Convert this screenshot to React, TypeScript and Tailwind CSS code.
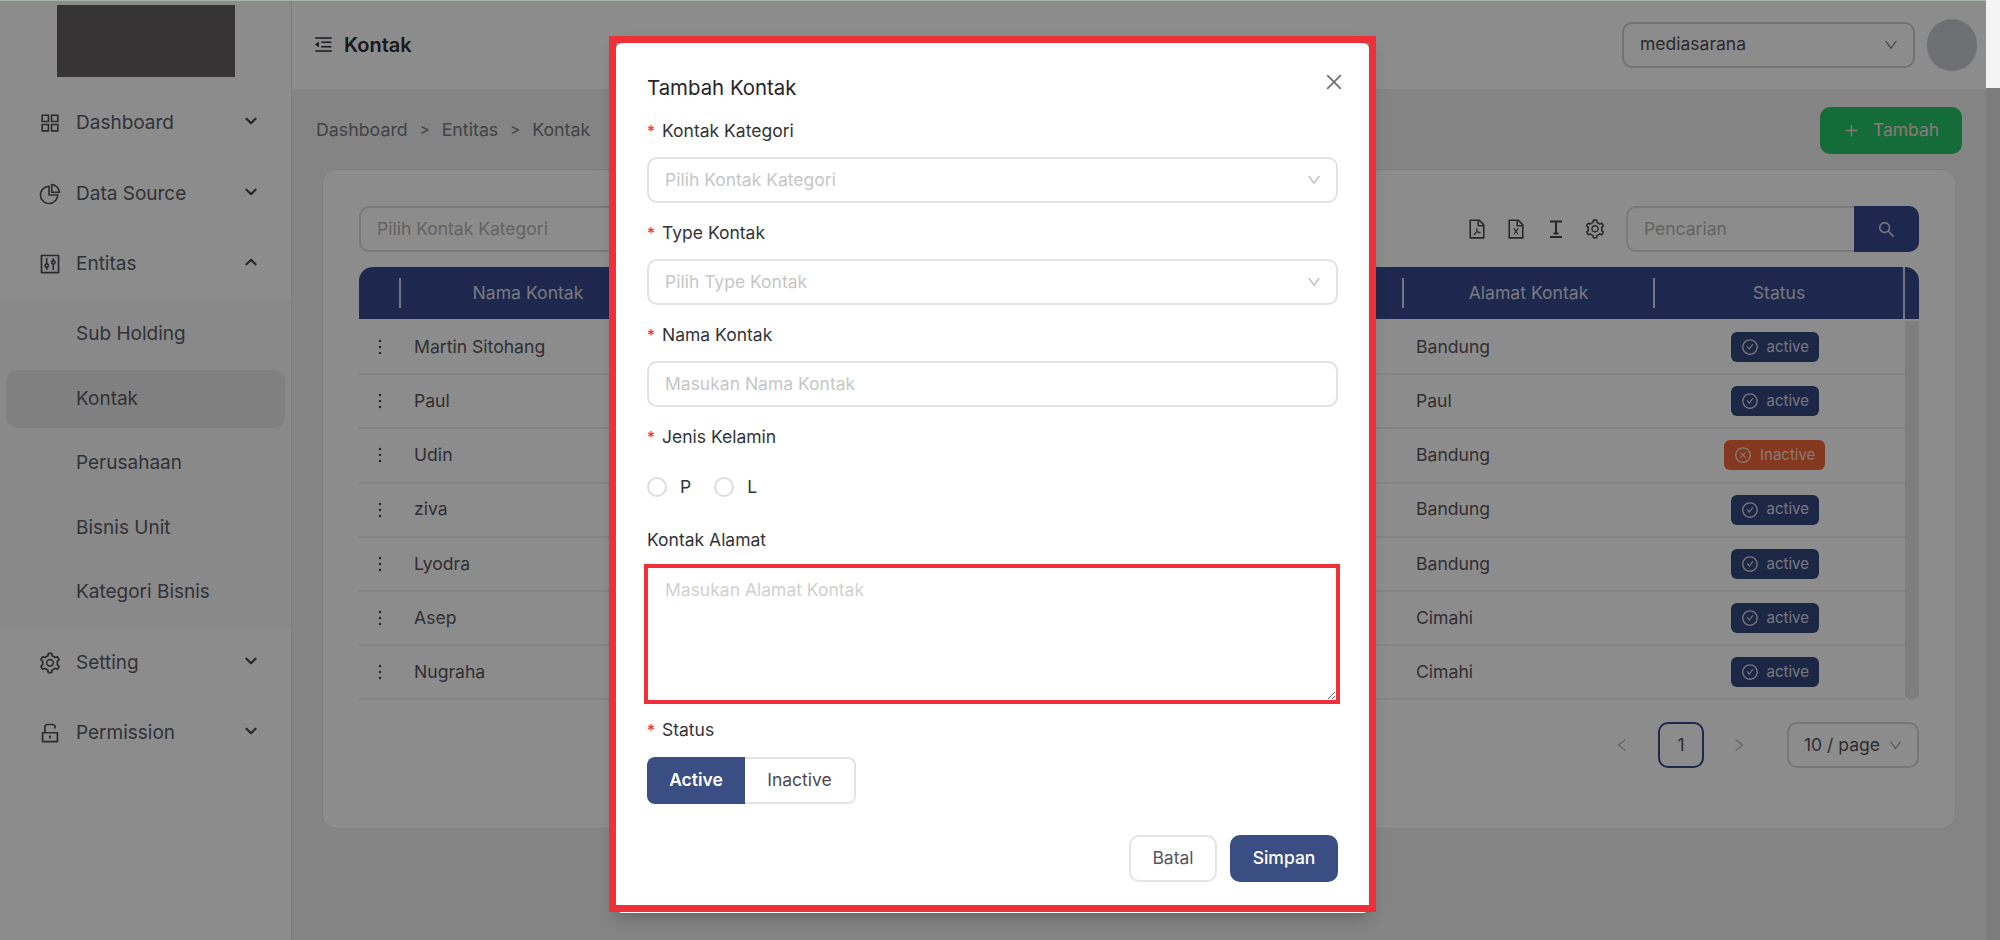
import { ReactNode } from 'react';
import {
  AiOutlineAppstore,
  AiOutlineCheckCircle,
  AiOutlineClose,
  AiOutlineCloseCircle,
  AiOutlineControl,
  AiOutlineDown,
  AiOutlineFileExcel,
  AiOutlineFilePdf,
  AiOutlineLeft,
  AiOutlineMenuFold,
  AiOutlineMore,
  AiOutlinePieChart,
  AiOutlinePlus,
  AiOutlineRight,
  AiOutlineSearch,
  AiOutlineSetting,
  AiOutlineUnlock,
} from 'react-icons/ai';
import { LuChevronDown, LuChevronUp } from 'react-icons/lu';

const subMenu = ['Sub Holding', 'Kontak', 'Perusahaan', 'Bisnis Unit', 'Kategori Bisnis'];

const rows = [
  { name: 'Martin Sitohang', address: 'Bandung', active: true },
  { name: 'Paul', address: 'Paul', active: true },
  { name: 'Udin', address: 'Bandung', active: false },
  { name: 'ziva', address: 'Bandung', active: true },
  { name: 'Lyodra', address: 'Bandung', active: true },
  { name: 'Asep', address: 'Cimahi', active: true },
  { name: 'Nugraha', address: 'Cimahi', active: true },
];

const MenuItem = ({ icon, label, open }: { icon: ReactNode; label: string; open?: boolean }) => (
  <div className="flex h-[70.5px] items-center pl-[38px] pr-[31px] text-[19px] text-[#5b5c66]">
    <span className="flex w-[38px] shrink-0 text-[24px] text-[#4f4e54]">{icon}</span>
    <span className="flex-1">{label}</span>
    <span className="-mt-[4px] text-[18px] text-[#4a4a50]">
      {open ? <LuChevronUp strokeWidth={3} /> : <LuChevronDown strokeWidth={3} />}
    </span>
  </div>
);

const Sidebar = () => (
  <aside className="flex w-[292px] shrink-0 flex-col border-r border-[#e6e6e6] bg-white">
    <div className="flex h-[88px] justify-center pt-[5px]">
      <div className="h-[72px] w-[178px] bg-[#636061]" />
    </div>
    <MenuItem icon={<AiOutlineAppstore />} label="Dashboard" />
    <MenuItem icon={<AiOutlinePieChart />} label="Data Source" />
    <MenuItem icon={<AiOutlineControl />} label="Entitas" open />
    <div className="flex flex-col gap-[6.5px] bg-[#fafafa] px-[6px] py-[6px] text-[19px] text-[#5b5c66]">
      {subMenu.map(item => (
        <div
          key={item}
          className={`flex h-[58px] items-center rounded-[12px] pl-[70px] ${item === 'Kontak' ? 'bg-[#e9e9e9]' : ''}`}
        >
          {item}
        </div>
      ))}
    </div>
    <MenuItem icon={<AiOutlineSetting />} label="Setting" />
    <MenuItem icon={<AiOutlineUnlock />} label="Permission" />
  </aside>
);

const Badge = ({ active }: { active: boolean }) =>
  active ? (
    <span className="inline-flex h-[30px] w-[88px] items-center gap-[8px] rounded-[6px] bg-[#34477f] pl-[10px] text-[15px] text-[#d8dbe6]">
      <AiOutlineCheckCircle className="text-[18px]" />
      active
    </span>
  ) : (
    <span className="inline-flex h-[30px] w-[101px] items-center gap-[8px] rounded-[6px] bg-[#f0673a] pl-[10px] text-[15px] text-[#fbdccf]">
      <AiOutlineCloseCircle className="text-[18px]" />
      Inactive
    </span>
  );

const ContactTable = () => (
  <div className="mt-[15px]">
    <div className="flex h-[52px] items-center rounded-t-[14px] bg-[#384a8f] text-[17.6px] text-[#d9dce8]">
      <div className="h-[30px] w-[42px] border-r-2 border-[#d5d8e4]" />
      <div className="w-[254px] text-center">Nama Kontak</div>
      <div className="h-[30px] flex-1 border-r-2 border-[#d5d8e4]" />
      <div className="h-[30px] w-[251px] border-r-2 border-[#d5d8e4] text-center leading-[30px]">Alamat Kontak</div>
      <div className="h-[52px] w-[250px] border-r-2 border-[#d5d8e4] text-center leading-[52px]">Status</div>
      <div className="w-[14px]" />
    </div>
    <div className="flex pt-[2px]">
      <div className="flex-1">
        {rows.map(row => (
          <div key={row.name} className="flex h-[54.2px] items-center border-b-2 border-[#eeeeee] text-[17.6px] text-[#5a5560]">
            <div className="flex w-[42px] justify-center text-[22px] text-[#444444]">
              <AiOutlineMore />
            </div>
            <div className="w-[254px] pl-[13px]">{row.name}</div>
            <div className="flex-1" />
            <div className="w-[251px] pl-[12px]">{row.address}</div>
            <div className="flex w-[250px] justify-center pr-[11px]">
              <Badge active={row.active} />
            </div>
          </div>
        ))}
      </div>
      <div className="w-[14px] rounded-b-[8px] bg-[#e6e6e6]" />
    </div>
  </div>
);

const MainContent = () => (
  <main className="flex min-w-0 flex-1 flex-col bg-[#f1f1f1]">
    <header className="flex h-[89px] shrink-0 items-center justify-between bg-white pl-[21px] pr-[9px]">
      <div className="flex items-center gap-[10px] text-[20px] font-semibold text-[#2d2d36]">
        <AiOutlineMenuFold className="text-[21px]" />
        Kontak
      </div>
      <div className="flex items-center gap-[12px]">
        <div className="flex h-[46px] w-[293px] items-center justify-between rounded-[10px] border-2 border-[#cfcfcf] pl-[16px] pr-[14px] text-[17.5px] text-[#4f4a55]">
          mediasarana
          <AiOutlineDown className="text-[16px] text-[#8a8a8a]" />
        </div>
        <div className="h-[52px] w-[50px] rounded-full bg-[#cbccd3]" />
      </div>
    </header>

    <div className="flex items-start justify-between pl-[24px] pr-[24px] pt-[18px]">
      <div className="flex h-[46px] items-center gap-[12px] text-[17.8px] text-[#777880]">
        <span>Dashboard</span>
        <span className="text-[15px]">&gt;</span>
        <span>Entitas</span>
        <span className="text-[15px]">&gt;</span>
        <span>Kontak</span>
      </div>
      <button className="flex h-[47px] w-[142px] items-center justify-center gap-[13px] rounded-[10px] bg-[#25c668] text-[17.5px] text-[#ffd9d9]">
        <AiOutlinePlus className="text-[17px]" />
        Tambah
      </button>
    </div>

    <section className="ml-[30px] mr-[30px] mt-[15px] h-[660px] rounded-[14px] border border-[#e8e8e8] bg-white px-[36px] pt-[36px]">
      <div className="flex items-center justify-between">
        <div className="flex h-[46px] w-[300px] items-center rounded-[10px] border-2 border-[#dcdcdc] pl-[16px] text-[17.5px] text-[#b5b5b5]">
          Pilih Kontak Kategori
        </div>
        <div className="flex items-center">
          <div className="mr-[20px] flex items-center gap-[17.5px] text-[22px] text-[#4d474b]">
            <AiOutlineFilePdf />
            <AiOutlineFileExcel />
            <svg width="22" height="22" viewBox="0 0 22 22" fill="none" stroke="currentColor" strokeWidth="2">
              <path d="M5 3.5h12M5 19h12M11 4v11M8.5 15.5h5" />
            </svg>
            <AiOutlineSetting />
          </div>
          <div className="flex h-[46px] w-[228px] items-center rounded-l-[10px] border-2 border-r-0 border-[#dcdcdc] pl-[16px] text-[17.5px] text-[#b5b5b5]">
            Pencarian
          </div>
          <div className="flex h-[46px] w-[65px] items-center justify-center rounded-r-[10px] bg-[#384a8f] text-[19px] text-[#dfe2ec]">
            <AiOutlineSearch />
          </div>
        </div>
      </div>

      <ContactTable />

      <div className="mt-[22px] flex items-center justify-end text-[17.5px] text-[#55505a]">
        <div className="mr-[13px] flex w-[46px] justify-center text-[16px] text-[#b5b5b5]">
          <AiOutlineLeft />
        </div>
        <div className="flex h-[46px] w-[46px] items-center justify-center rounded-[10px] border-2 border-[#3a4d88]">1</div>
        <div className="ml-[12px] mr-[25px] flex w-[46px] justify-center text-[16px] text-[#b5b5b5]">
          <AiOutlineRight />
        </div>
        <div className="flex h-[46px] w-[132px] items-center justify-between rounded-[10px] border-2 border-[#d8d8d8] pl-[15px] pr-[14px]">
          10 / page
          <AiOutlineDown className="text-[15px] text-[#a0a0a0]" />
        </div>
      </div>
    </section>
  </main>
);

const FieldLabel = ({ children, required = true }: { children: ReactNode; required?: boolean }) => (
  <div className="flex h-[24px] items-center text-[17.5px] text-[#33333a]">
    {required && <span className="mr-[7px] w-[8px] text-[16px] leading-none text-[#f5222d]">*</span>}
    {children}
  </div>
);

const FieldSelect = ({ placeholder }: { placeholder: string }) => (
  <div className="mt-[14px] flex h-[46px] items-center justify-between rounded-[10px] border-2 border-[#e2e2e2] pl-[16px] pr-[14px] text-[17.5px] text-[#c6c6c6]">
    {placeholder}
    <AiOutlineDown className="text-[16px] text-[#b8b8b8]" />
  </div>
);

const Radio = ({ label }: { label: string }) => (
  <div className="flex h-[20px] items-center gap-[13px] text-[17.5px] text-[#33333a]">
    <span className="h-[20px] w-[20px] rounded-full border-2 border-[#dcdcdc] bg-white" />
    {label}
  </div>
);

const AddContactModal = () => (
  <div className="absolute left-[616px] top-[43px] h-[870px] w-[753px] rounded-[6px] bg-white px-[31px] pt-[31px] shadow-[0_4px_16px_rgba(0,0,0,0.25)]">
    <div className="flex h-[28px] items-center text-[20.4px] text-[#26262c]">Tambah Kontak</div>
    <AiOutlineClose className="absolute right-[24px] top-[28px] text-[22px] text-[#707070]" />

    <div className="mt-[17px]">
      <FieldLabel>Kontak Kategori</FieldLabel>
      <FieldSelect placeholder="Pilih Kontak Kategori" />
    </div>
    <div className="mt-[18px]">
      <FieldLabel>Type Kontak</FieldLabel>
      <FieldSelect placeholder="Pilih Type Kontak" />
    </div>
    <div className="mt-[18px]">
      <FieldLabel>Nama Kontak</FieldLabel>
      <div className="mt-[14px] flex h-[46px] items-center rounded-[10px] border-2 border-[#e2e2e2] pl-[16px] text-[17.5px] text-[#c6c6c6]">
        Masukan Nama Kontak
      </div>
    </div>
    <div className="mt-[18px]">
      <FieldLabel>Jenis Kelamin</FieldLabel>
      <div className="mt-[28px] flex gap-[23px]">
        <Radio label="P" />
        <Radio label="L" />
      </div>
    </div>

    <div className="mt-[31px]">
      <FieldLabel required={false}>Kontak Alamat</FieldLabel>
      <textarea
        placeholder="Masukan Alamat Kontak"
        className="-ml-[3px] mt-[12px] block h-[140px] w-[696px] border-4 border-[#ef3038] pl-[17px] pt-[9px] text-[17.5px] outline-none placeholder:text-[#d0d0d0]"
      />
    </div>

    <div className="mt-[14px]">
      <FieldLabel>Status</FieldLabel>
      <div className="mt-[15px] flex h-[47px] w-[209px] text-[17.5px]">
        <div className="flex w-[98px] items-center justify-center rounded-l-[8px] bg-[#3b4e84] font-semibold text-white">
          Active
        </div>
        <div className="flex flex-1 items-center justify-center rounded-r-[8px] border-2 border-l-0 border-[#e4e4e4] text-[#4a4a50]">
          Inactive
        </div>
      </div>
    </div>

    <div className="mt-[31px] flex justify-end gap-[13px] text-[17.5px]">
      <button className="h-[47px] w-[88px] rounded-[10px] border-2 border-[#e4e4e4] text-[#55555c]">Batal</button>
      <button className="h-[47px] w-[108px] rounded-[10px] bg-[#3b4e84] font-medium text-white">Simpan</button>
    </div>

    <div className="pointer-events-none absolute -left-[7px] -right-[7px] -top-[7px] bottom-[1px] border-[7px] border-[#ef3038]" />
  </div>
);

const App = () => {
  return (
    <div className="relative flex h-[940px] w-full overflow-hidden bg-[#f1f1f1] font-['Inter',sans-serif]">
      <Sidebar />
      <MainContent />
      <div className="w-[14px] shrink-0 rounded-t-[8px] bg-[#e4e4e4]" />

      <div className="absolute inset-0 bg-black/45" />
      <div className="absolute left-0 right-0 top-0 h-px bg-[#a9b3a9]" />
      <div className="absolute right-0 top-0 h-[88px] w-[14px] bg-[#f4f4f4]" />
      <AddContactModal />
    </div>
  );
};

export default App;
